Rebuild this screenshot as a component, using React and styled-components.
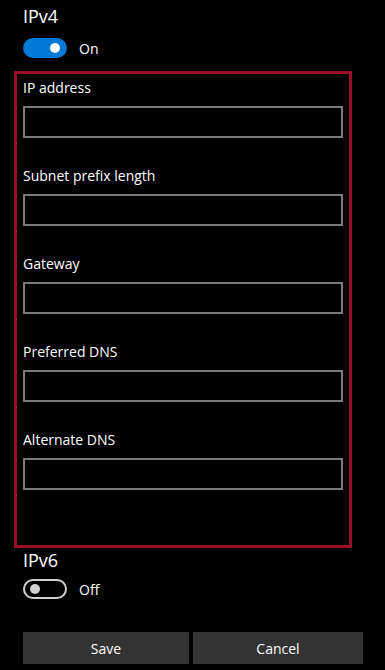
import React from "react";
import styled, { createGlobalStyle } from "styled-components";

const GlobalStyle = createGlobalStyle`
  html, body {
    margin: 0;
    padding: 0;
    background: #000;
  }
  body {
    font-family: "Open Sans", "Noto Sans", sans-serif;
    color: #fff;
  }
`;

const Page = styled.div`
  width: 385px;
  height: 670px;
  padding: 0 23px 0 14px;
  box-sizing: border-box;
  display: flex;
  flex-direction: column;
`;

const SectionTitle = styled.div`
  margin: ${(p) => p.$top}px 0 0 9px;
  font-size: 18px;
  line-height: 24px;
  height: 24px;
`;

const ToggleRow = styled.div`
  margin: ${(p) => p.$top}px 0 0 9px;
  display: flex;
  align-items: center;
  gap: 12px;
  height: 20px;
  font-size: 14px;
`;

const Track = styled.div`
  width: 44px;
  height: 20px;
  box-sizing: border-box;
  border-radius: 10px;
  display: flex;
  align-items: center;
  padding: 0 5px;
  justify-content: ${(p) => (p.$on ? "flex-end" : "flex-start")};
  background: ${(p) => (p.$on ? "#0078d7" : "transparent")};
  border: 2px solid ${(p) => (p.$on ? "#0078d7" : "#d0d0d0")};
`;

const Knob = styled.div`
  width: 10px;
  height: 10px;
  border-radius: 50%;
  background: ${(p) => (p.$on ? "#fff" : "#d0d0d0")};
`;

const Panel = styled.div`
  margin: 13px 10px 0 0;
  height: 477px;
  box-sizing: border-box;
  border: 3px solid #9b1029;
  padding: 4px 6px 0 6px;
  display: flex;
  flex-direction: column;
  gap: 28px;
`;

const Field = styled.div`
  display: flex;
  flex-direction: column;
`;

const Label = styled.label`
  font-size: 14px;
  line-height: 20px;
  height: 20px;
  margin-bottom: 8px;
`;

const Input = styled.input`
  height: 32px;
  box-sizing: border-box;
  border: 2px solid #7a7a7a;
  background: #000;
  color: #fff;
  font: inherit;
  font-size: 14px;
  padding: 0 8px;
  outline: none;
`;

const Buttons = styled.div`
  margin: 33px 0 0 9px;
  display: grid;
  grid-template-columns: 166px 170px;
  gap: 4px;
`;

const Button = styled.button`
  height: 32px;
  border: none;
  background: #333;
  color: #fff;
  font-family: inherit;
  font-size: 14px;
  padding: 0;
`;

function Toggle({ on, top }) {
  return (
    <ToggleRow $top={top}>
      <Track $on={on}>
        <Knob $on={on} />
      </Track>
      <span>{on ? "On" : "Off"}</span>
    </ToggleRow>
  );
}

const fields = [
  "IP address",
  "Subnet prefix length",
  "Gateway",
  "Preferred DNS",
  "Alternate DNS",
];

export default function App() {
  return (
    <>
      <GlobalStyle />
      <Page>
        <SectionTitle $top={4}>IPv4</SectionTitle>
        <Toggle on top={10} />
        <Panel>
          {fields.map((f) => (
            <Field key={f}>
              <Label>{f}</Label>
              <Input type="text" />
            </Field>
          ))}
        </Panel>
        <SectionTitle $top={0}>IPv6</SectionTitle>
        <Toggle on={false} top={7} />
        <Buttons>
          <Button>Save</Button>
          <Button>Cancel</Button>
        </Buttons>
      </Page>
    </>
  );
}
